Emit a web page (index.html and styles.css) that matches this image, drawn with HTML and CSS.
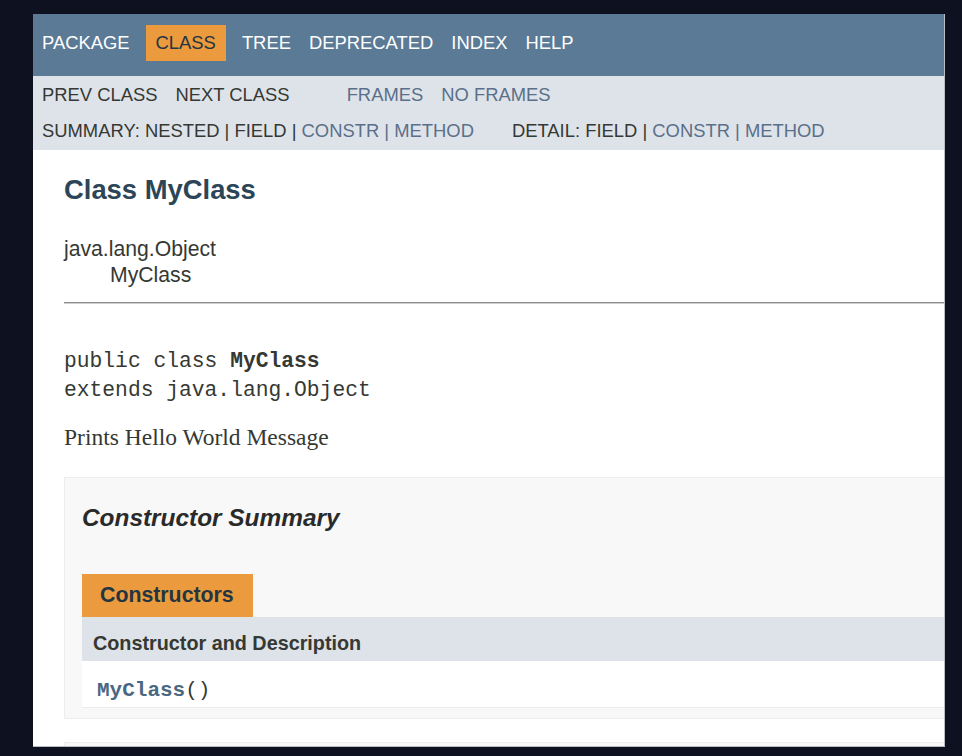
FILE: index.html
```html
<!DOCTYPE html>
<html lang="en">
<head>
<meta charset="utf-8">
<title>MyClass</title>
<link rel="stylesheet" href="styles.css">
</head>
<body>
<div class="window">
  <div class="topnav">
    <ul class="navlist">
      <li>PACKAGE</li>
      <li class="current">CLASS</li>
      <li>TREE</li>
      <li>DEPRECATED</li>
      <li>INDEX</li>
      <li>HELP</li>
    </ul>
  </div>
  <div class="subnav">
    <div class="subrow">
      <ul class="navlist first">
        <li>PREV CLASS</li>
        <li>NEXT CLASS</li>
      </ul>
      <ul class="navlist">
        <li><a class="link">FRAMES</a></li>
        <li><a class="link">NO FRAMES</a></li>
      </ul>
    </div>
    <div class="subrow">
      <ul class="subnavlist">
        <li>SUMMARY:&nbsp;</li>
        <li>NESTED&nbsp;|&nbsp;</li>
        <li>FIELD&nbsp;|&nbsp;</li>
        <li><a class="link">CONSTR&nbsp;|&nbsp;</a></li>
        <li><a class="link">METHOD</a></li>
      </ul>
      <ul class="subnavlist second">
        <li>DETAIL:&nbsp;</li>
        <li>FIELD&nbsp;|&nbsp;</li>
        <li><a class="link">CONSTR&nbsp;|&nbsp;</a></li>
        <li><a class="link">METHOD</a></li>
      </ul>
    </div>
  </div>
  <div class="content">
    <h2 class="title">Class MyClass</h2>
    <ul class="inheritance">
      <li>java.lang.Object</li>
      <li class="indent">MyClass</li>
    </ul>
    <hr class="rule">
    <pre class="decl">public class <b>MyClass</b>
extends java.lang.Object</pre>
    <div class="block">Prints Hello World Message</div>
    <div class="summary">
      <h3 class="summary-title">Constructor Summary</h3>
      <div class="tabrow"><span class="tab">Constructors</span></div>
      <table class="member-table">
        <tr class="head-row"><th>Constructor and Description</th></tr>
        <tr class="data-row"><td><a class="code-link">MyClass</a><span class="paren">()</span></td></tr>
      </table>
    </div>
    <div class="summary next-box"></div>
  </div>
</div>
</body>
</html>
```
FILE: styles.css
```css
html, body {
  margin: 0;
  padding: 0;
}
body {
  background: #0d1120;
  width: 962px;
  height: 756px;
  overflow: hidden;
  font-family: "Liberation Sans", Arial, sans-serif;
  color: #353833;
}
.window {
  margin: 14px 0 0 33px;
  width: 912px;
  height: 733px;
  background: #ffffff;
  overflow: hidden;
  border-right: 1px solid #b9bcc2;
  border-bottom: 1px solid #b9bcc2;
  box-sizing: border-box;
}
ul {
  list-style: none;
  margin: 0;
  padding: 0;
}
.topnav {
  height: 62px;
  box-sizing: border-box;
  padding-top: 11px;
  background: #5a7a96;
  color: #ffffff;
  font-size: 18.4px;
}
.navlist {
  display: flex;
}
.navlist li {
  padding: 0 9px;
  line-height: 36px;
  height: 36px;
  white-space: nowrap;
}
.navlist li.current {
  background: #eb9b3d;
  color: #253441;
  margin: 0 7px;
  padding: 0 10px;
}
.subnav {
  background: #dee3e9;
  padding: 1px 0;
  font-size: 18.4px;
  color: #353833;
}
.subrow {
  display: flex;
  height: 36px;
  line-height: 36px;
  white-space: nowrap;
}
.navlist.first {
  margin-right: 39px;
}
.link {
  color: #5a708a;
}
.subnavlist {
  display: flex;
  padding-left: 9px;
}
.subnavlist.second {
  margin-left: 29px;
}
.content {
  padding: 0 0 0 31px;
}
.title {
  margin: 24px 0 0 0;
  font-size: 27.4px;
  line-height: 31px;
  font-weight: bold;
  color: #2c4557;
}
.inheritance {
  margin-top: 31px;
  font-size: 21.2px;
  line-height: 26px;
  color: #353833;
}
.inheritance .indent {
  padding-left: 46px;
}
.rule {
  margin: 14px 0 0 0;
  height: 0;
  border: 0;
  border-top: 1px solid #8e8e8e;
  border-bottom: 1px solid #cfcfcf;
}
.decl {
  margin: 43px 0 0 0;
  font-family: "Liberation Mono", "Courier New", monospace;
  font-size: 21.3px;
  line-height: 29px;
  color: #353833;
}
.decl b {
  font-weight: bold;
}
.block {
  margin-top: 19px;
  font-family: "Liberation Serif", "Times New Roman", serif;
  font-size: 23.5px;
  line-height: 27px;
  color: #353833;
}
.summary {
  margin: 26px -40px 0 0;
  background: #f8f8f8;
  border: 1px solid #ededed;
  padding: 0 0 10px 17px;
}
.summary-title {
  margin: 26px 0 0 0;
  font-size: 24.4px;
  line-height: 28px;
  font-weight: bold;
  font-style: italic;
  color: #2a2a2a;
}
.tabrow {
  margin-top: 42px;
  display: flex;
}
.tab {
  display: block;
  height: 43px;
  line-height: 43px;
  padding: 0 19px 0 18px;
  background: #eb9b3d;
  color: #253441;
  font-size: 21.3px;
  font-weight: bold;
}
.member-table {
  width: 100%;
  border-collapse: collapse;
  border-spacing: 0;
}
.head-row th {
  background: #dee3e9;
  text-align: left;
  font-size: 19.8px;
  font-weight: bold;
  color: #353833;
  padding: 8px 0 0 11px;
  height: 36px;
  line-height: 36px;
  vertical-align: top;
}
.data-row td {
  background: #ffffff;
  padding: 13px 0 0 15px;
  height: 33px;
  line-height: 33px;
  vertical-align: top;
  font-family: "Liberation Mono", "Courier New", monospace;
  font-size: 21px;
  border-bottom: 1px solid #ececec;
}
.code-link {
  color: #4a6782;
  font-weight: bold;
}
.paren {
  color: #353833;
}
.next-box {
  margin-top: 23px;
  height: 50px;
  padding: 0;
}
```
